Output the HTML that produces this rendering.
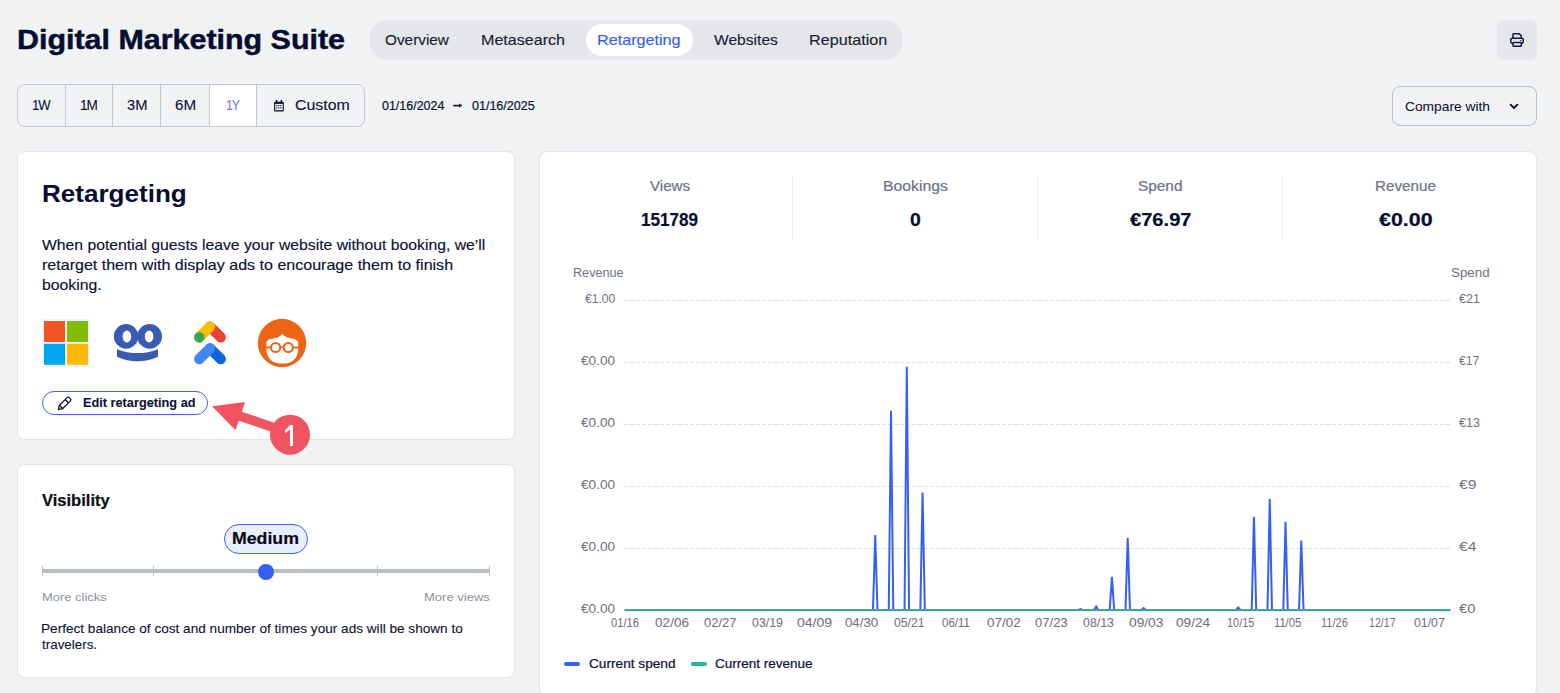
<!DOCTYPE html>
<html><head><meta charset="utf-8"><style>
html,body{margin:0;padding:0;}
body{width:1560px;height:693px;overflow:hidden;position:relative;background:#f1f2f4;font-family:"Liberation Sans",sans-serif;}
.b{position:absolute;}
.card{box-sizing:border-box;background:#fff;border:1px solid #e3e5ea;border-radius:8px;}
.t{position:absolute;white-space:nowrap;line-height:1;transform-origin:0 0;}
svg.ov{position:absolute;left:0;top:0;}
.one{position:absolute;left:278px;top:421px;width:24px;text-align:center;color:#fff;font-size:30px;line-height:1;}
</style></head><body>
<div class="b" style="left:369px;top:20px;width:534px;height:40px;border-radius:20px;background:#e4e6ea"></div>
<div class="b" style="left:586px;top:24px;width:107px;height:32px;border-radius:16px;background:#fff"></div>
<div class="b" style="left:1497px;top:20px;width:40px;height:40px;border-radius:7px;background:#e4e6ea"></div>
<div class="b" style="left:209.5px;top:84.5px;width:47px;height:42px;background:#fff"></div>
<div class="b" style="left:17px;top:84px;width:348px;height:43px;box-sizing:border-box;border:1px solid #c3c8d0;border-radius:8px"></div>
<div class="b" style="left:65px;top:84px;width:1px;height:43px;background:#c3c8d0"></div>
<div class="b" style="left:112px;top:84px;width:1px;height:43px;background:#c3c8d0"></div>
<div class="b" style="left:160px;top:84px;width:1px;height:43px;background:#c3c8d0"></div>
<div class="b" style="left:209px;top:84px;width:1px;height:43px;background:#c3c8d0"></div>
<div class="b" style="left:256px;top:84px;width:1px;height:43px;background:#c3c8d0"></div>
<div class="b" style="left:1392px;top:86px;width:145px;height:40px;box-sizing:border-box;border:1px solid #bcc2cb;border-radius:8px"></div>
<div class="b card" style="left:17px;top:151px;width:498px;height:289px"></div>
<div class="b card" style="left:17px;top:464px;width:498px;height:214px"></div>
<div class="b card" style="left:539px;top:151px;width:998px;height:546px"></div>
<div class="b" style="left:792px;top:176px;width:1px;height:64px;background:#eceef2"></div>
<div class="b" style="left:1037px;top:176px;width:1px;height:64px;background:#eceef2"></div>
<div class="b" style="left:1282px;top:176px;width:1px;height:64px;background:#eceef2"></div>
<div class="b" style="left:42px;top:391px;width:166px;height:24px;box-sizing:border-box;border:1px solid #3a63f5;border-radius:12px"></div>
<div class="b" style="left:224px;top:524px;width:84px;height:30px;box-sizing:border-box;border:1px solid #3a63f5;border-radius:15px;background:#e9eefd"></div>
<div class="b" style="left:42px;top:569px;width:448px;height:4px;background:#b9bec6"></div>
<div class="b" style="left:42px;top:566px;width:1px;height:10px;background:#b9bec6"></div>
<div class="b" style="left:153px;top:566px;width:1px;height:10px;background:#b9bec6"></div>
<div class="b" style="left:377px;top:566px;width:1px;height:10px;background:#b9bec6"></div>
<div class="b" style="left:489px;top:566px;width:1px;height:10px;background:#b9bec6"></div>
<div class="b" style="left:258px;top:564px;width:16px;height:16px;border-radius:8px;background:#3461f5"></div>
<svg class="ov" width="1560" height="693" viewBox="0 0 1560 693">
<line x1="624" y1="300.5" x2="1450" y2="300.5" stroke="#dde2ee" stroke-width="1" stroke-dasharray="4 2"/>
<line x1="624" y1="362.5" x2="1450" y2="362.5" stroke="#dde2ee" stroke-width="1" stroke-dasharray="4 2"/>
<line x1="624" y1="424.5" x2="1450" y2="424.5" stroke="#dde2ee" stroke-width="1" stroke-dasharray="4 2"/>
<line x1="624" y1="486.5" x2="1450" y2="486.5" stroke="#dde2ee" stroke-width="1" stroke-dasharray="4 2"/>
<line x1="624" y1="548.5" x2="1450" y2="548.5" stroke="#dde2ee" stroke-width="1" stroke-dasharray="4 2"/>
<polyline points="625.00,610.00 627.25,610.00 629.51,610.00 631.76,610.00 634.02,610.00 636.27,610.00 638.53,610.00 640.78,610.00 643.03,610.00 645.29,610.00 647.54,610.00 649.80,610.00 652.05,610.00 654.31,610.00 656.56,610.00 658.81,610.00 661.07,610.00 663.32,610.00 665.58,610.00 667.83,610.00 670.09,610.00 672.34,610.00 674.59,610.00 676.85,610.00 679.10,610.00 681.36,610.00 683.61,610.00 685.87,610.00 688.12,610.00 690.37,610.00 692.63,610.00 694.88,610.00 697.14,610.00 699.39,610.00 701.65,610.00 703.90,610.00 706.15,610.00 708.41,610.00 710.66,610.00 712.92,610.00 715.17,610.00 717.43,610.00 719.68,610.00 721.93,610.00 724.19,610.00 726.44,610.00 728.70,610.00 730.95,610.00 733.21,610.00 735.46,610.00 737.72,610.00 739.97,610.00 742.22,610.00 744.48,610.00 746.73,610.00 748.99,610.00 751.24,610.00 753.50,610.00 755.75,610.00 758.00,610.00 760.26,610.00 762.51,610.00 764.77,610.00 767.02,610.00 769.28,610.00 771.53,610.00 773.78,610.00 776.04,610.00 778.29,610.00 780.55,610.00 782.80,610.00 785.06,610.00 787.31,610.00 789.56,610.00 791.82,610.00 794.07,610.00 796.33,610.00 798.58,610.00 800.84,610.00 803.09,610.00 805.34,610.00 807.60,610.00 809.85,610.00 812.11,610.00 814.36,610.00 816.62,610.00 818.87,610.00 821.12,610.00 823.38,610.00 825.63,610.00 827.89,610.00 830.14,610.00 832.40,610.00 834.65,610.00 836.90,610.00 839.16,610.00 841.41,610.00 843.67,610.00 845.92,610.00 848.18,610.00 850.43,610.00 852.68,610.00 854.94,610.00 857.19,610.00 859.45,610.00 861.70,610.00 863.96,610.00 866.21,610.00 868.46,610.00 870.72,610.00 872.97,610.00 875.23,535.00 877.48,610.00 879.74,610.00 881.99,610.00 884.24,610.00 886.50,610.00 888.75,610.00 891.01,410.70 893.26,610.00 895.52,610.00 897.77,610.00 900.02,610.00 902.28,610.00 904.53,610.00 906.79,366.80 909.04,610.00 911.30,610.00 913.55,610.00 915.80,610.00 918.06,610.00 920.31,610.00 922.57,492.60 924.82,610.00 927.08,610.00 929.33,610.00 931.58,610.00 933.84,610.00 936.09,610.00 938.35,610.00 940.60,610.00 942.86,610.00 945.11,610.00 947.36,610.00 949.62,610.00 951.87,610.00 954.13,610.00 956.38,610.00 958.64,610.00 960.89,610.00 963.14,610.00 965.40,610.00 967.65,610.00 969.91,610.00 972.16,610.00 974.42,610.00 976.67,610.00 978.93,610.00 981.18,610.00 983.43,610.00 985.69,610.00 987.94,610.00 990.20,610.00 992.45,610.00 994.71,610.00 996.96,610.00 999.21,610.00 1001.47,610.00 1003.72,610.00 1005.98,610.00 1008.23,610.00 1010.49,610.00 1012.74,610.00 1014.99,610.00 1017.25,610.00 1019.50,610.00 1021.76,610.00 1024.01,610.00 1026.27,610.00 1028.52,610.00 1030.77,610.00 1033.03,610.00 1035.28,610.00 1037.54,610.00 1039.79,610.00 1042.05,610.00 1044.30,610.00 1046.55,610.00 1048.81,610.00 1051.06,610.00 1053.32,610.00 1055.57,610.00 1057.83,610.00 1060.08,610.00 1062.33,610.00 1064.59,610.00 1066.84,610.00 1069.10,610.00 1071.35,610.00 1073.61,610.00 1075.86,610.00 1078.11,610.00 1080.37,609.00 1082.62,610.00 1084.88,610.00 1087.13,610.00 1089.39,610.00 1091.64,610.00 1093.89,610.00 1096.15,606.50 1098.40,610.00 1100.66,610.00 1102.91,610.00 1105.17,610.00 1107.42,610.00 1109.67,610.00 1111.93,576.80 1114.18,610.00 1116.44,610.00 1118.69,610.00 1120.95,610.00 1123.20,610.00 1125.45,610.00 1127.71,538.00 1129.96,610.00 1132.22,610.00 1134.47,610.00 1136.73,610.00 1138.98,610.00 1141.23,610.00 1143.49,608.00 1145.74,610.00 1148.00,610.00 1150.25,610.00 1152.51,610.00 1154.76,610.00 1157.01,610.00 1159.27,610.00 1161.52,610.00 1163.78,610.00 1166.03,610.00 1168.29,610.00 1170.54,610.00 1172.79,610.00 1175.05,610.00 1177.30,610.00 1179.56,610.00 1181.81,610.00 1184.07,610.00 1186.32,610.00 1188.58,610.00 1190.83,610.00 1193.08,610.00 1195.34,610.00 1197.59,610.00 1199.85,610.00 1202.10,610.00 1204.36,610.00 1206.61,610.00 1208.86,610.00 1211.12,610.00 1213.37,610.00 1215.63,610.00 1217.88,610.00 1220.14,610.00 1222.39,610.00 1224.64,610.00 1226.90,610.00 1229.15,610.00 1231.41,610.00 1233.66,610.00 1235.92,610.00 1238.17,607.50 1240.42,610.00 1242.68,610.00 1244.93,610.00 1247.19,610.00 1249.44,610.00 1251.70,610.00 1253.95,516.90 1256.20,610.00 1258.46,610.00 1260.71,610.00 1262.97,610.00 1265.22,610.00 1267.48,610.00 1269.73,499.00 1271.98,610.00 1274.24,610.00 1276.49,610.00 1278.75,610.00 1281.00,610.00 1283.26,610.00 1285.51,521.70 1287.76,610.00 1290.02,610.00 1292.27,610.00 1294.53,610.00 1296.78,610.00 1299.04,610.00 1301.29,540.50 1303.54,610.00 1305.80,610.00 1308.05,610.00 1310.31,610.00 1312.56,610.00 1314.82,610.00 1317.07,610.00 1319.32,610.00 1321.58,610.00 1323.83,610.00 1326.09,610.00 1328.34,610.00 1330.60,610.00 1332.85,610.00 1335.10,610.00 1337.36,610.00 1339.61,610.00 1341.87,610.00 1344.12,610.00 1346.38,610.00 1348.63,610.00 1350.88,610.00 1353.14,610.00 1355.39,610.00 1357.65,610.00 1359.90,610.00 1362.16,610.00 1364.41,610.00 1366.66,610.00 1368.92,610.00 1371.17,610.00 1373.43,610.00 1375.68,610.00 1377.94,610.00 1380.19,610.00 1382.44,610.00 1384.70,610.00 1386.95,610.00 1389.21,610.00 1391.46,610.00 1393.72,610.00 1395.97,610.00 1398.22,610.00 1400.48,610.00 1402.73,610.00 1404.99,610.00 1407.24,610.00 1409.50,610.00 1411.75,610.00 1414.01,610.00 1416.26,610.00 1418.51,610.00 1420.77,610.00 1423.02,610.00 1425.28,610.00 1427.53,610.00 1429.79,610.00 1432.04,610.00 1434.29,610.00 1436.55,610.00 1438.80,610.00 1441.06,610.00 1443.31,610.00 1445.57,610.00 1447.82,610.00 1450.07,610.00" fill="none" stroke="#3461f5" stroke-width="2" stroke-linejoin="miter"/>
<line x1="624.5" y1="610" x2="1450.5" y2="610" stroke="#25b493" stroke-width="2"/>
<line x1="566" y1="664" x2="578" y2="664" stroke="#3461f5" stroke-width="4" stroke-linecap="round"/>
<line x1="693" y1="664" x2="705" y2="664" stroke="#25b493" stroke-width="4" stroke-linecap="round"/>
<rect x="42.5" y="319" width="47" height="48" fill="#f3f3f3"/>
<rect x="44" y="321" width="21" height="21" fill="#f35325"/>
<rect x="67" y="321" width="21" height="21" fill="#81bc06"/>
<rect x="44" y="343.8" width="21" height="21" fill="#05a6f0"/>
<rect x="67" y="343.8" width="21" height="21" fill="#ffba08"/>
<ellipse cx="126.1" cy="336.4" rx="12.2" ry="12.3" fill="#3a5ab4"/>
<ellipse cx="149.6" cy="336.4" rx="12.4" ry="12.3" fill="#3a5ab4"/>
<ellipse cx="126.9" cy="336.5" rx="4.3" ry="6" fill="#fff"/>
<ellipse cx="149.1" cy="336.5" rx="4.3" ry="6" fill="#fff"/>
<path d="M117,349.2 Q137.5,357 158,349.2 L158,356.7 Q137.5,366 117,356.7 Z" fill="#3a5ab4"/>
<line x1="210" y1="326.6" x2="220.7" y2="337.3" stroke="#ea4335" stroke-width="10.4" stroke-linecap="round"/>
<line x1="199.3" y1="337.3" x2="210" y2="326.6" stroke="#fbbc04" stroke-width="10.4" stroke-linecap="round"/>
<circle cx="199.3" cy="337.3" r="5.2" fill="#34a853"/>
<line x1="210" y1="348.4" x2="220.7" y2="359" stroke="#0b66da" stroke-width="10.4" stroke-linecap="round"/>
<line x1="199.3" y1="359" x2="210" y2="348.4" stroke="#4285f4" stroke-width="10.4" stroke-linecap="round"/>
<circle cx="282" cy="343" r="24.2" fill="#ec6414"/>
<path d="M266.4,341.8 Q267.8,339.6 273,338.6 Q280,337.2 282.3,333.8 Q284.6,337.2 291.6,338.6 Q296.8,339.6 298.2,341.8 L298.2,350 Q297,363.6 282.3,363.6 Q267.6,363.6 266.4,350 Z" fill="#fff"/>
<circle cx="275.6" cy="347.5" r="4.6" fill="none" stroke="#ec6414" stroke-width="2"/>
<circle cx="288.3" cy="347.5" r="4.6" fill="none" stroke="#ec6414" stroke-width="2"/>
<line x1="265" y1="347.5" x2="271" y2="347.5" stroke="#ec6414" stroke-width="2"/>
<line x1="292.9" y1="347.5" x2="299" y2="347.5" stroke="#ec6414" stroke-width="2"/>
<line x1="280" y1="347" x2="284" y2="347" stroke="#ec6414" stroke-width="1.5"/>
<g fill="none" stroke="#0b1134" stroke-width="1.5" stroke-linejoin="round" transform="translate(58.4,409.6) scale(0.87) translate(-58.6,-409.4)"><path d="M58.6,409.4 L59.6,404.6 L68.6,395.6 Q69.8,394.4 71,395.6 L72.4,397 Q73.6,398.2 72.4,399.4 L63.4,408.4 Z"/><line x1="66.4" y1="397.8" x2="70.2" y2="401.6"/><line x1="59.8" y1="404.4" x2="63.6" y2="408.2"/></g>
<g fill="#0b1134"><rect x="274.1" y="101.7" width="9.7" height="9.8" rx="1"/><rect x="275.8" y="100" width="1.5" height="2.4"/><rect x="280.6" y="100" width="1.5" height="2.4"/></g>
<rect x="275.2" y="103.9" width="7.5" height="6.3" fill="#f1f2f4"/>
<g fill="#3a4060"><rect x="276.1" y="105" width="1.3" height="1.3"/><rect x="278.1" y="105" width="1.3" height="1.3"/><rect x="280.1" y="105" width="1.3" height="1.3"/><rect x="276.1" y="107.3" width="1.3" height="1.3"/><rect x="278.1" y="107.3" width="1.3" height="1.3"/><rect x="280.1" y="107.3" width="1.3" height="1.3"/></g>
<line x1="453.2" y1="105.6" x2="460" y2="105.6" stroke="#0b1134" stroke-width="1.6"/><path d="M459,103.4 L462.4,105.6 L459,107.8 Z" fill="#0b1134"/>
<path d="M1510.6,104.6 L1514,108 L1517.4,104.6" fill="none" stroke="#0b1134" stroke-width="1.8" stroke-linecap="round" stroke-linejoin="round"/>
<path d="M212.1,406.2 L245,402.1 L241.9,411.7 L274.2,422.8 L270.7,431.4 L238.9,420.8 L235.4,429.9 Z" fill="#f05461"/>
<circle cx="290" cy="434.7" r="20" fill="#f05461"/>
<path d="M290,425 L293,425 L293,446 L290,446 L290,429.6 L285.3,433.1 L284.9,430.4 Z" fill="#fff"/>
<g fill="none" stroke="#0f1a3e" stroke-width="1.5" stroke-linejoin="round"><path d="M1513,38.2 V34.4 Q1513,33.7 1513.7,33.7 H1519.2 L1521.3,35.8 V38.2"/><rect x="1510.75" y="38.25" width="12.5" height="5" rx="1.6"/><rect x="1513" y="42.6" width="8.3" height="3.6" rx="0.8" fill="#e4e6ea"/></g><rect x="1520.2" y="40.2" width="1.4" height="0.9" fill="#0f1a3e"/>
</svg>
<div class="t" id="t0" style="left:16.93px;top:25.00px;font-size:28.5px;color:#060d30;font-weight:bold;-webkit-text-stroke:0.5px #060d30;transform:scaleX(1.0676);">Digital Marketing Suite</div>
<div class="t" id="t1" style="left:385.00px;top:33.00px;font-size:14.5px;color:#1a1f33;-webkit-text-stroke:0.15px #1a1f33;transform:scaleX(1.0581);">Overview</div>
<div class="t" id="t2" style="left:481.29px;top:33.00px;font-size:14.5px;color:#1a1f33;-webkit-text-stroke:0.15px #1a1f33;transform:scaleX(1.1085);">Metasearch</div>
<div class="t" id="t3" style="left:713.50px;top:33.00px;font-size:14.5px;color:#1a1f33;-webkit-text-stroke:0.15px #1a1f33;transform:scaleX(1.0758);">Websites</div>
<div class="t" id="t4" style="left:808.88px;top:33.00px;font-size:14.5px;color:#1a1f33;-webkit-text-stroke:0.15px #1a1f33;transform:scaleX(1.1162);">Reputation</div>
<div class="t" id="t5" style="left:596.88px;top:33.00px;font-size:14.5px;color:#3461f5;-webkit-text-stroke:0.15px #3461f5;transform:scaleX(1.1150);">Retargeting</div>
<div class="t" id="t6" style="left:31.80px;top:98.00px;font-size:14.5px;color:#0b1134;-webkit-text-stroke:0.1px #0b1134;letter-spacing:-1.2px;transform:scaleX(0.9011);">1W</div>
<div class="t" id="t7" style="left:79.96px;top:98.00px;font-size:14.5px;color:#0b1134;-webkit-text-stroke:0.1px #0b1134;letter-spacing:-1.2px;transform:scaleX(0.9428);">1M</div>
<div class="t" id="t8" style="left:126.90px;top:98.00px;font-size:14.5px;color:#0b1134;-webkit-text-stroke:0.1px #0b1134;transform:scaleX(1.0124);">3M</div>
<div class="t" id="t9" style="left:175.40px;top:98.00px;font-size:14.5px;color:#0b1134;-webkit-text-stroke:0.1px #0b1134;transform:scaleX(1.0491);">6M</div>
<div class="t" id="t10" style="left:225.95px;top:98.00px;font-size:14.5px;color:#6a7cf6;-webkit-text-stroke:0.15px #6a7cf6;letter-spacing:-1.2px;transform:scaleX(0.8400);">1Y</div>
<div class="t" id="t11" style="left:295.10px;top:98.00px;font-size:14.5px;color:#0b1134;-webkit-text-stroke:0.1px #0b1134;transform:scaleX(1.0967);">Custom</div>
<div class="t" id="t12" style="left:381.60px;top:99.00px;font-size:13.5px;color:#0b1134;-webkit-text-stroke:0.2px #0b1134;transform:scaleX(0.9227);">01/16/2024</div>
<div class="t" id="t13" style="left:471.80px;top:99.00px;font-size:13.5px;color:#0b1134;-webkit-text-stroke:0.2px #0b1134;transform:scaleX(0.9276);">01/16/2025</div>
<div class="t" id="t14" style="left:1404.60px;top:100.00px;font-size:13px;color:#0b1134;-webkit-text-stroke:0.05px #0b1134;transform:scaleX(1.0592);">Compare with</div>
<div class="t" id="t15" style="left:41.83px;top:182.00px;font-size:24.4px;color:#060d30;font-weight:bold;transform:scaleX(1.0680);">Retargeting</div>
<div class="t" id="t16" style="left:42.00px;top:238.00px;font-size:14.5px;color:#0b1134;-webkit-text-stroke:0.15px #0b1134;transform:scaleX(1.0847);">When potential guests leave your website without booking, we’ll</div>
<div class="t" id="t17" style="left:42.00px;top:258.00px;font-size:14.5px;color:#0b1134;-webkit-text-stroke:0.15px #0b1134;transform:scaleX(1.1063);">retarget them with display ads to encourage them to finish</div>
<div class="t" id="t18" style="left:42.00px;top:278.00px;font-size:14.5px;color:#0b1134;-webkit-text-stroke:0.15px #0b1134;transform:scaleX(1.0894);">booking.</div>
<div class="t" id="t19" style="left:83.10px;top:397.00px;font-size:12.4px;color:#0b1134;font-weight:bold;-webkit-text-stroke:0.1px #0b1134;transform:scaleX(1.0276);">Edit retargeting ad</div>
<div class="t" id="t20" style="left:42.00px;top:493.00px;font-size:15.7px;color:#0a0a12;font-weight:bold;-webkit-text-stroke:0.2px #0a0a12;transform:scaleX(1.0542);">Visibility</div>
<div class="t" id="t21" style="left:232.09px;top:531.00px;font-size:16px;color:#0a0a12;font-weight:bold;-webkit-text-stroke:0.2px #0a0a12;transform:scaleX(1.1078);">Medium</div>
<div class="t" id="t22" style="left:42.10px;top:592.00px;font-size:11.8px;color:#8a909c;transform:scaleX(1.0983);">More clicks</div>
<div class="t" id="t23" style="left:424.00px;top:592.00px;font-size:11.8px;color:#8a909c;transform:scaleX(1.1045);">More views</div>
<div class="t" id="t24" style="left:40.74px;top:623.00px;font-size:12.8px;color:#0b1134;-webkit-text-stroke:0.1px #0b1134;transform:scaleX(1.0627);">Perfect balance of cost and number of times your ads will be shown to</div>
<div class="t" id="t25" style="left:41.80px;top:639.00px;font-size:12.8px;color:#0b1134;-webkit-text-stroke:0.1px #0b1134;transform:scaleX(1.0467);">travelers.</div>
<div class="t" id="t26" style="left:650.40px;top:179.00px;font-size:14.5px;color:#6b7385;-webkit-text-stroke:0.2px #6b7385;transform:scaleX(1.0428);">Views</div>
<div class="t" id="t27" style="left:882.71px;top:179.00px;font-size:14.5px;color:#6b7385;-webkit-text-stroke:0.2px #6b7385;transform:scaleX(1.0856);">Bookings</div>
<div class="t" id="t28" style="left:1138.00px;top:179.00px;font-size:14.5px;color:#6b7385;-webkit-text-stroke:0.2px #6b7385;transform:scaleX(1.0606);">Spend</div>
<div class="t" id="t29" style="left:1374.55px;top:179.00px;font-size:14.5px;color:#6b7385;-webkit-text-stroke:0.2px #6b7385;transform:scaleX(1.0495);">Revenue</div>
<div class="t" id="t30" style="left:641.28px;top:211.00px;font-size:18.5px;color:#060d30;font-weight:bold;-webkit-text-stroke:0.2px #060d30;transform:scaleX(0.9232);">151789</div>
<div class="t" id="t31" style="left:910.00px;top:211.00px;font-size:18.5px;color:#060d30;font-weight:bold;-webkit-text-stroke:0.2px #060d30;transform:scaleX(1.0500);">0</div>
<div class="t" id="t32" style="left:1130.00px;top:211.00px;font-size:18.5px;color:#060d30;font-weight:bold;-webkit-text-stroke:0.2px #060d30;transform:scaleX(1.0871);">€76.97</div>
<div class="t" id="t33" style="left:1378.70px;top:211.00px;font-size:18.5px;color:#060d30;font-weight:bold;-webkit-text-stroke:0.2px #060d30;transform:scaleX(1.1564);">€0.00</div>
<div class="t" id="t34" style="left:572.80px;top:267.00px;font-size:12px;color:#6e7280;transform:scaleX(1.0525);">Revenue</div>
<div class="t" id="t35" style="left:1451.20px;top:267.00px;font-size:12px;color:#6e7280;transform:scaleX(1.1139);">Spend</div>
<div class="t" id="t36" style="left:585.00px;top:293.00px;font-size:12.5px;color:#6e7280;transform:scaleX(0.9704);">€1.00</div>
<div class="t" id="t37" style="left:581.30px;top:355.00px;font-size:12.5px;color:#6e7280;transform:scaleX(1.0885);">€0.00</div>
<div class="t" id="t38" style="left:581.30px;top:417.00px;font-size:12.5px;color:#6e7280;transform:scaleX(1.0885);">€0.00</div>
<div class="t" id="t39" style="left:581.30px;top:479.00px;font-size:12.5px;color:#6e7280;transform:scaleX(1.0885);">€0.00</div>
<div class="t" id="t40" style="left:581.30px;top:541.00px;font-size:12.5px;color:#6e7280;transform:scaleX(1.0885);">€0.00</div>
<div class="t" id="t41" style="left:581.30px;top:603.00px;font-size:12.5px;color:#6e7280;transform:scaleX(1.0885);">€0.00</div>
<div class="t" id="t42" style="left:1459.30px;top:293.00px;font-size:12.5px;color:#6e7280;transform:scaleX(1.0046);">€21</div>
<div class="t" id="t43" style="left:1459.30px;top:355.00px;font-size:12.5px;color:#6e7280;transform:scaleX(0.9663);">€17</div>
<div class="t" id="t44" style="left:1459.30px;top:417.00px;font-size:12.5px;color:#6e7280;transform:scaleX(1.0046);">€13</div>
<div class="t" id="t45" style="left:1459.33px;top:479.00px;font-size:12.5px;color:#6e7280;transform:scaleX(1.2500);">€9</div>
<div class="t" id="t46" style="left:1459.33px;top:541.00px;font-size:12.5px;color:#6e7280;transform:scaleX(1.2500);">€4</div>
<div class="t" id="t47" style="left:1459.30px;top:603.00px;font-size:12.5px;color:#6e7280;transform:scaleX(1.1826);">€0</div>
<div class="t" id="t48" style="left:611.10px;top:617.00px;font-size:12.5px;color:#6e7280;-webkit-text-stroke:0.05px #6e7280;transform:scaleX(0.8938);">01/16</div>
<div class="t" id="t49" style="left:655.30px;top:617.00px;font-size:12.5px;color:#6e7280;-webkit-text-stroke:0.05px #6e7280;transform:scaleX(1.0885);">02/06</div>
<div class="t" id="t50" style="left:703.60px;top:617.00px;font-size:12.5px;color:#6e7280;-webkit-text-stroke:0.05px #6e7280;transform:scaleX(1.0374);">02/27</div>
<div class="t" id="t51" style="left:751.70px;top:617.00px;font-size:12.5px;color:#6e7280;-webkit-text-stroke:0.05px #6e7280;transform:scaleX(0.9895);">03/19</div>
<div class="t" id="t52" style="left:796.90px;top:617.00px;font-size:12.5px;color:#6e7280;-webkit-text-stroke:0.05px #6e7280;transform:scaleX(1.1236);">04/09</div>
<div class="t" id="t53" style="left:845.00px;top:617.00px;font-size:12.5px;color:#6e7280;-webkit-text-stroke:0.05px #6e7280;transform:scaleX(1.0597);">04/30</div>
<div class="t" id="t54" style="left:893.90px;top:617.00px;font-size:12.5px;color:#6e7280;-webkit-text-stroke:0.05px #6e7280;transform:scaleX(0.9736);">05/21</div>
<div class="t" id="t55" style="left:942.30px;top:617.00px;font-size:12.5px;color:#6e7280;-webkit-text-stroke:0.05px #6e7280;transform:scaleX(0.9177);">06/11</div>
<div class="t" id="t56" style="left:986.70px;top:617.00px;font-size:12.5px;color:#6e7280;-webkit-text-stroke:0.05px #6e7280;transform:scaleX(1.0757);">07/02</div>
<div class="t" id="t57" style="left:1034.80px;top:617.00px;font-size:12.5px;color:#6e7280;-webkit-text-stroke:0.05px #6e7280;transform:scaleX(1.0438);">07/23</div>
<div class="t" id="t58" style="left:1083.10px;top:617.00px;font-size:12.5px;color:#6e7280;-webkit-text-stroke:0.05px #6e7280;transform:scaleX(0.9895);">08/13</div>
<div class="t" id="t59" style="left:1128.50px;top:617.00px;font-size:12.5px;color:#6e7280;-webkit-text-stroke:0.05px #6e7280;transform:scaleX(1.0980);">09/03</div>
<div class="t" id="t60" style="left:1175.80px;top:617.00px;font-size:12.5px;color:#6e7280;-webkit-text-stroke:0.05px #6e7280;transform:scaleX(1.0917);">09/24</div>
<div class="t" id="t61" style="left:1226.50px;top:617.00px;font-size:12.5px;color:#6e7280;-webkit-text-stroke:0.05px #6e7280;transform:scaleX(0.8746);">10/15</div>
<div class="t" id="t62" style="left:1274.20px;top:617.00px;font-size:12.5px;color:#6e7280;-webkit-text-stroke:0.05px #6e7280;transform:scaleX(0.8947);">11/05</div>
<div class="t" id="t63" style="left:1321.30px;top:617.00px;font-size:12.5px;color:#6e7280;-webkit-text-stroke:0.05px #6e7280;transform:scaleX(0.8881);">11/26</div>
<div class="t" id="t64" style="left:1369.20px;top:617.00px;font-size:12.5px;color:#6e7280;-webkit-text-stroke:0.05px #6e7280;transform:scaleX(0.8491);">12/17</div>
<div class="t" id="t65" style="left:1414.30px;top:617.00px;font-size:12.5px;color:#6e7280;-webkit-text-stroke:0.05px #6e7280;transform:scaleX(0.9831);">01/07</div>
<div class="t" id="t66" style="left:588.80px;top:658.00px;font-size:12.2px;color:#0b1134;-webkit-text-stroke:0.2px #0b1134;transform:scaleX(1.1209);">Current spend</div>
<div class="t" id="t67" style="left:715.40px;top:658.00px;font-size:12.2px;color:#0b1134;-webkit-text-stroke:0.2px #0b1134;transform:scaleX(1.1066);">Current revenue</div>
</body></html>
